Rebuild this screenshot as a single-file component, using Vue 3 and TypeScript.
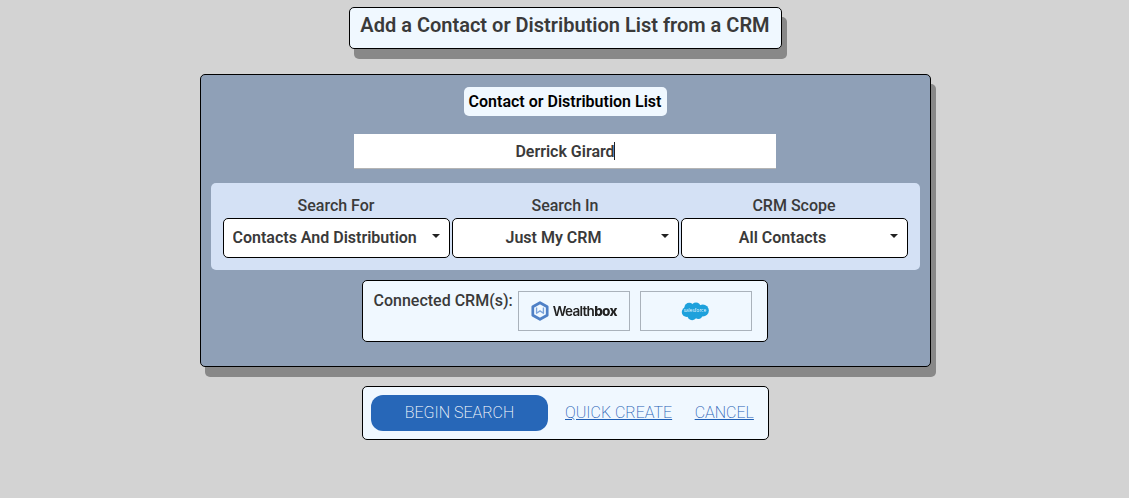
<script setup lang="ts">
interface Field { label: string; options: string[] }
const fields: Field[] = [
  { label: 'Search For', options: ['Contacts And Distribution Lists'] },
  { label: 'Search In', options: ['Just My CRM'] },
  { label: 'CRM Scope', options: ['All Contacts'] },
]
</script>

<template>
  <main class="page">
    <h1 class="title">Add a Contact or Distribution List from a CRM</h1>

    <section class="panel">
      <div class="panel-label">Contact or Distribution List</div>
      <div class="name-input"><span class="name-text">Derrick Girard</span><i class="caret"></i></div>

      <div class="filters">
        <div v-for="f in fields" :key="f.label" class="field">
          <label class="field-label">{{ f.label }}</label>
          <div class="select-wrap">
            <select class="field-select">
              <option v-for="o in f.options" :key="o">{{ o }}</option>
            </select>
          </div>
        </div>
      </div>

      <div class="connected">
        <span class="connected-label">Connected CRM(s):</span>
        <div class="logo-box">
          <svg class="wb-icon" viewBox="0 0 20 22" width="18" height="20" aria-hidden="true">
            <path d="M10 1.800 18 6.300v9.400l-8 4.500-8-4.500V6.300z" fill="none" stroke="#4f80c6" stroke-width="3" stroke-linejoin="round" />
            <path d="M6.200 7v6.500l3.800-2.600 3.800 2.600V7" fill="none" stroke="#7ba3da" stroke-width="1.500" stroke-linejoin="round" />
          </svg>
          <span class="wb-text">Wealth<b>box</b></span>
        </div>
        <div class="logo-box">
          <svg class="sf-logo" viewBox="0 0 30 20" width="29" height="20" aria-hidden="true">
            <g fill="#1ea1dc">
              <circle cx="8.500" cy="6.500" r="5" />
              <circle cx="15.500" cy="6" r="4.800" />
              <circle cx="22.500" cy="9.500" r="6.300" />
              <circle cx="6" cy="11" r="5.200" />
              <circle cx="11.500" cy="14.500" r="5" />
              <circle cx="18" cy="14" r="4.300" />
            </g>
            <text x="14.500" y="11.500" text-anchor="middle" class="sf-text">salesforce</text>
          </svg>
        </div>
      </div>
    </section>

    <nav class="actions">
      <button class="primary" type="button">BEGIN SEARCH</button>
      <a class="link" href="#">QUICK CREATE</a>
      <a class="link" href="#">CANCEL</a>
    </nav>
  </main>
</template>

<style>
html, body { margin: 0; background: #d3d3d3; }
</style>

<style scoped>
.page {
  display: flex;
  flex-direction: column;
  align-items: center;
  height: 498px;
  box-sizing: border-box;
  padding: 7px 0 0 1px;
  font-family: Roboto, sans-serif;
  color: #3a3a3a;
  background: #d3d3d3;
}
.title {
  margin: 0;
  width: 433px;
  height: 42px;
  box-sizing: border-box;
  border: 1px solid #000;
  border-radius: 5px;
  background: #f0f8ff;
  box-shadow: 5px 10px 0 #888;
  font-size: 20px;
  font-weight: 600;
  line-height: 34px;
  text-align: center;
}
.panel {
  margin-top: 25px;
  width: 731px;
  height: 293px;
  box-sizing: border-box;
  border: 1px solid #000;
  border-radius: 5px;
  background: #8fa0b7;
  box-shadow: 5px 10px 0 #888;
  display: flex;
  flex-direction: column;
  align-items: center;
  padding: 12px 10px 0;
}
.panel-label {
  width: 203px;
  height: 29px;
  border-radius: 5px;
  background: #f0f8ff;
  color: #000;
  font-size: 16px;
  font-weight: 600;
  line-height: 29px;
  text-align: center;
}
.name-input {
  margin: 18px 1px 0 0;
  width: 422px;
  height: 35px;
  box-sizing: border-box;
  background: #fff;
  border-bottom: 1px solid #b4b4b4;
  display: flex;
  align-items: center;
  justify-content: center;
  font-size: 16px;
  font-weight: 600;
}
.name-text { margin-left: 1px; }
.caret {
  width: 1px;
  height: 18px;
  margin-left: -1px;
  background: #222;
}
.filters {
  margin-top: 14px;
  align-self: stretch;
  height: 87px;
  box-sizing: border-box;
  border-radius: 5px;
  background: #d4e1f5;
  padding: 12px 12px 0;
  display: grid;
  grid-template-columns: repeat(3, 227px);
  column-gap: 2px;
}
.field {
  display: flex;
  flex-direction: column;
  align-items: stretch;
}
.field-label {
  height: 23px;
  line-height: 21px;
  font-size: 16px;
  font-weight: 500;
  text-align: center;
}
.select-wrap {
  position: relative;
  display: flex;
}
.select-wrap::after {
  content: "";
  position: absolute;
  right: 10px;
  top: 16px;
  border-style: solid;
  border-width: 4px 4px 0;
  border-color: #222 transparent transparent;
  pointer-events: none;
}
.field-select {
  appearance: none;
  width: 100%;
  height: 40px;
  box-sizing: border-box;
  padding: 0 32px 2px 9px;
  border: 1px solid #000;
  border-radius: 5px;
  background: #fff;
  color: #3a3a3a;
  font-family: Roboto, sans-serif;
  font-size: 16px;
  font-weight: 600;
  text-align: center;
}
.connected {
  margin: 10px 1px 0 0;
  width: 406px;
  height: 62px;
  box-sizing: border-box;
  border: 1px solid #000;
  border-radius: 5px;
  background: #f0f8ff;
  padding: 10px 15px 0 11px;
  display: flex;
  align-items: flex-start;
}
.connected-label {
  font-size: 16px;
  font-weight: 500;
  line-height: 19px;
  white-space: nowrap;
  margin-right: 5px;
}
.logo-box {
  flex: none;
  width: 112px;
  height: 40px;
  box-sizing: border-box;
  border: 1px solid #aab2bb;
  display: flex;
  align-items: center;
  justify-content: center;
  margin-right: 10px;
}
.logo-box:last-child { margin-right: 0; }
.wb-icon { margin-right: 4px; filter: blur(0.3px); }
.sf-logo { filter: blur(0.3px); }
.wb-text {
  font-family: Inter, sans-serif;
  font-size: 13.5px;
  font-weight: 600;
  letter-spacing: -0.7px;
  color: #222;
  filter: blur(0.3px);
}
.wb-text b { font-weight: 800; }
.sf-text {
  font-family: "Open Sans", sans-serif;
  font-size: 5px;
  fill: #e4f4fc;
}
.actions {
  margin-top: 19px;
  width: 407px;
  height: 54px;
  box-sizing: border-box;
  border: 1px solid #000;
  border-radius: 5px;
  background: #f0f8ff;
  padding: 8px 0 0 8px;
  display: flex;
  align-items: flex-start;
  font-size: 16px;
  font-weight: 200;
}
.primary {
  width: 177px;
  height: 36px;
  border: 0;
  border-radius: 12px;
  background: #2767b8;
  color: #fff;
  font: inherit;
  padding: 0 0 2px 1px;
}
.link {
  color: #1f5fb5;
  line-height: 36px;
  margin-left: 17.5px;
}
.link + .link { margin-left: 22.5px; }
</style>
